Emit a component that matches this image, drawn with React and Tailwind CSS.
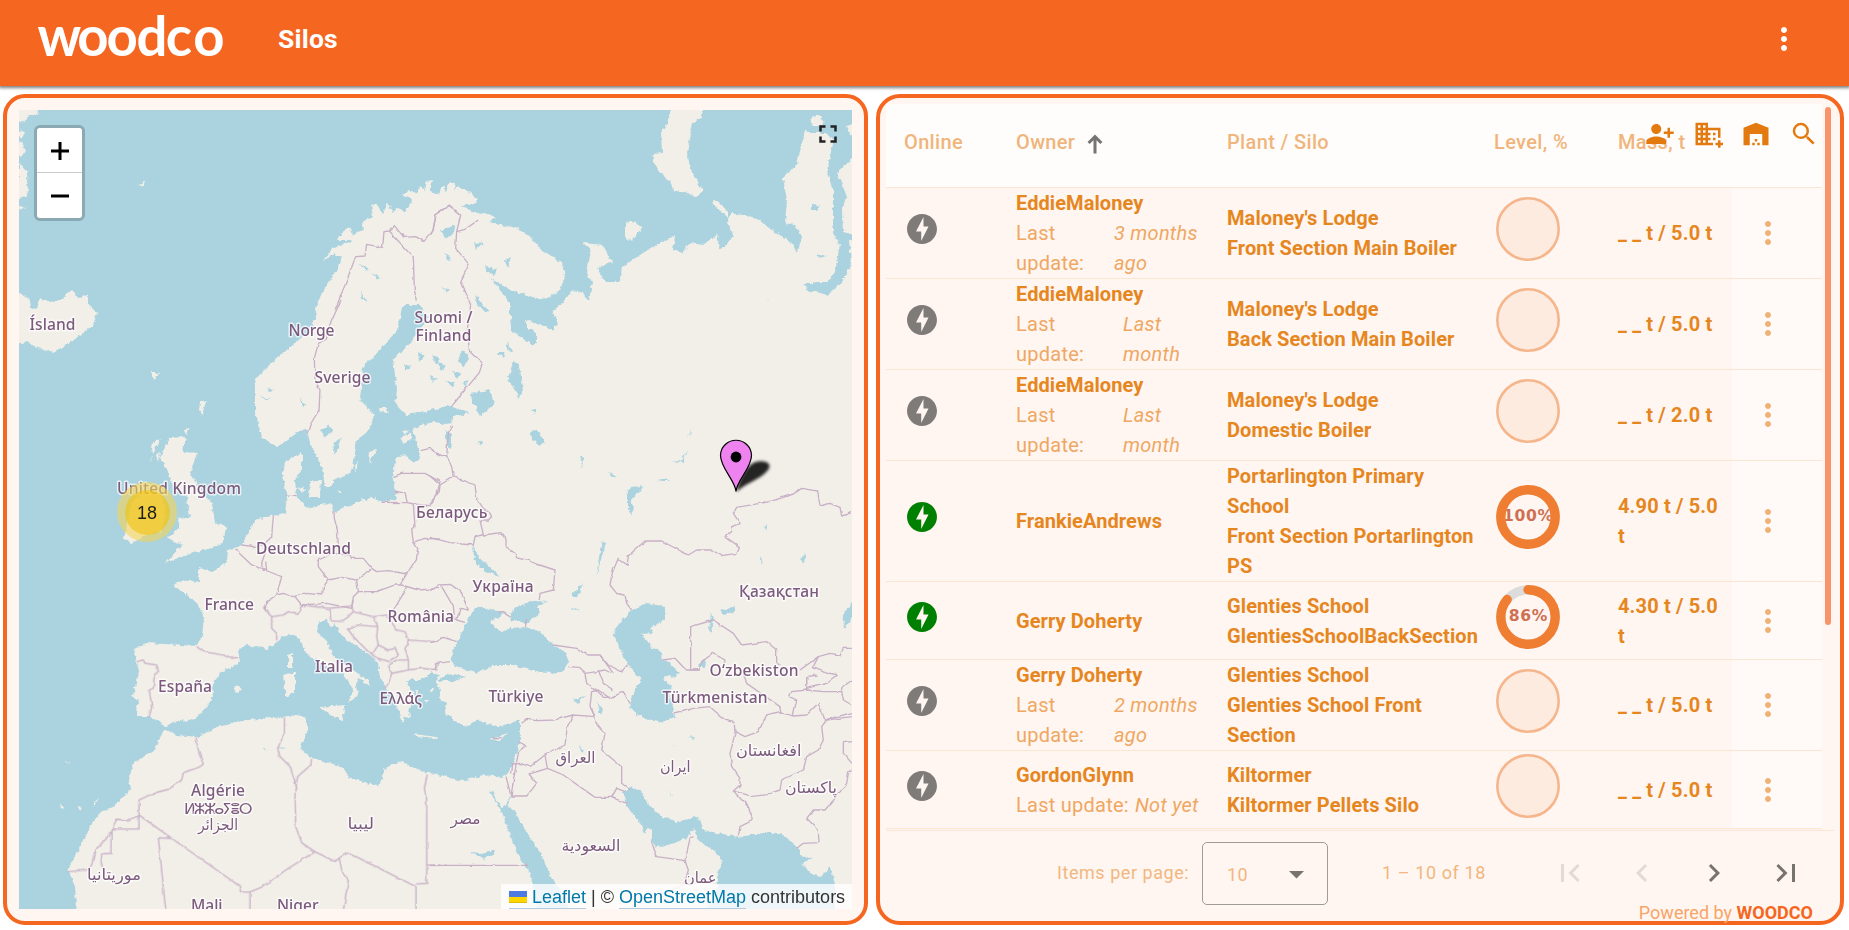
import React from "react";
import {
  MdPersonAddAlt1,
  MdDomainAdd,
  MdWarehouse,
  MdSearch,
  MdMoreVert,
  MdFullscreen,
  MdFirstPage,
  MdLastPage,
  MdChevronLeft,
  MdChevronRight,
  MdOfflineBolt,
} from "react-icons/md";

const WATER = "#aad3df";
const LAND = "#f2efe9";

const EURAFRICA =
  "315,308 320,297 328,283 337,270 342,257 335,254 323,260 333,248 353,240 338,240 342,232 350,228 352,236 364,229 360,223 373,217 371,205 376,204 383,213 388,203 392,212 400,208 404,212 413,200 402,195 410,190 417,194 419,186 425,190 427,181 433,180 430,190 438,195 443,186 446,192 449,182 455,182 454,190 459,187 468,190 478,200 474,204 460,206 477,213 485,212 495,218 490,221 502,225 517,228 530,237 542,250 553,257 562,263 565,277 560,290 550,297 540,299 527,295 510,290 498,283 490,278 500,290 510,303 510,320 512,332 522,338 532,345 537,342 537,333 527,328 525,320 537,323 552,330 558,323 552,312 563,302 573,290 583,293 589,302 592,282 587,273 591,250 583,243 603,245 612,262 597,268 605,282 620,282 622,267 643,253 660,243 675,235 673,250 682,253 690,243 703,245 717,235 720,248 725,247 733,235 727,220 732,213 757,218 777,233 792,243 797,253 802,237 795,225 785,223 787,200 783,178 797,165 805,130 812,133 825,133 834,140 827,170 833,187 833,233 840,245 835,272 827,283 803,283 807,290 828,295 843,282 851,263 849,240 862,236 862,925 76,925 76,909 75,887 68,868 80,848 88,830 100,812 113,807 130,790 129,780 133,763 155,750 162,733 166,728 160,722 150,717 137,717 138,700 133,697 139,667 133,650 147,643 197,646 202,637 204,617 197,603 187,595 173,585 187,580 199,582 199,568 213,572 227,562 228,550 242,545 255,520 267,517 285,513 287,497 283,477 285,462 302,453 302,470 295,480 297,497 307,508 330,503 335,512 370,497 382,502 397,500 393,480 395,460 403,453 413,463 421,458 415,440 413,428 433,422 446,424 452,423 453,417 470,413 458,409 447,405 440,408 407,415 395,403 397,390 393,360 410,343 416,335 428,318 420,305 405,305 402,308 397,330 383,347 363,367 360,400 375,415 367,432 357,440 353,467 348,475 333,480 333,487 325,487 322,468 310,443 307,428 297,433 277,447 262,437 255,413 255,380 267,367 287,350 307,333 317,317";

const ISLANDS = [
  "170,438 186,437 182,452 197,453 190,473 200,487 212,503 215,523 228,527 220,545 187,555 165,563 182,545 168,538 180,527 177,518 190,517 187,497 173,487 167,470 160,457",
  "146,490 160,494 166,510 162,530 145,536 131,543 124,539 128,518 133,500",
  "9,290 22,294 30,300 31,308 37,309 40,298 52,303 62,299 72,290 79,297 88,295 88,304 97,313 93,325 70,343 53,352 37,348 30,342 9,344",
  "674,100 710,100 700,118 693,123 687,153 692,173 703,192 697,196 684,193 673,190 670,181 660,173 653,160 654,154 662,153 661,133 667,122",
  "625,223 635,221 642,229 632,241 625,237",
  "713,199 719,202 728,212 728,217 714,206",
  "810,120 817,114 825,122 818,127 812,127",
  "846,126 862,122 862,135 850,134",
  "862,150 837,172 847,197 842,210 843,232 862,235",
  "9,100 39,110 38,115 30,115 24,121 9,122",
  "9,128 25,132 22,138 19,136 9,145",
  "19,141 26,149 22,156 9,154",
  "19,163 27,172 28,196 19,199",
  "135,188 145,180 143,185 138,186",
  "19,206 25,207 20,211",
  "283,675 295,672 295,692 286,697",
  "288,655 293,652 293,668 288,668",
  "320,707 345,705 342,721 330,715",
  "233,688 239,686 242,690 237,692",
  "414,734 437,737 436,739 416,737",
  "489,739 508,733 500,741",
  "310,482 321,480 320,497 309,497",
  "298,487 305,488 302,494",
  "368,453 377,448 370,463",
  "354,468 358,460 356,472",
  "400,438 411,433 412,438 404,444",
  "402,431 409,430 405,434",
  "378,408 387,408 389,413 381,412",
  "150,373 159,373 154,380",
  "200,403 206,401 202,415 199,410",
  "184,431 190,427 187,434",
  "151,443 161,439 153,453",
  "156,455 160,453 158,462",
  "150,457 152,455 151,463",
  "60,803 63,808 61,809",
  "78,807 82,808 80,811",
  "92,807 98,798 96,804",
  "66,761 70,762 67,763",
  "527,320 535,323 535,332 526,326",
  "415,690 418,690 418,694",
  "424,700 428,700 427,703",
  "431,688 434,690 431,692",
  "337,490 342,492 339,494",
];

const SEAS = [
  "165,727 173,722 195,719 213,700 212,685 220,673 240,662 238,650 247,645 267,649 277,642 288,634 300,639 305,652 325,667 343,673 353,690 348,703 358,695 357,683 358,677 370,686 368,680 350,668 333,657 327,640 317,632 318,622 328,620 330,628 335,623 343,637 370,655 378,663 380,678 388,690 397,707 403,722 406,716 410,717 408,707 417,700 406,680 420,680 430,673 440,675 436,683 440,690 440,698 447,704 445,712 453,720 467,727 477,720 497,727 520,720 520,740 512,768 503,777 483,775 463,781 430,773 427,773 413,767 400,761 383,770 383,780 377,786 348,777 343,767 312,758 300,748 307,733 307,718 297,715 283,717 247,720 217,727 197,737 177,735 165,730",
  "475,608 467,620 457,643 450,657 455,667 477,673 497,665 513,665 540,673 563,672 569,662 565,652 553,645 540,632 527,627 510,628 502,633 490,622 505,613 485,608",
  "512,610 527,603 547,600 537,607 540,613 527,623 510,620",
  "438,681 445,675 455,674 466,677 455,681",
  "632,610 647,603 665,607 665,620 650,628 653,633 642,634 652,647 662,653 663,660 668,662 680,673 675,677 665,676 663,679 672,687 669,694 672,703 674,718 657,722 642,717 630,708 632,695 642,678 635,673 630,667 619,647 613,632 622,620",
  "623,793 630,787 640,790 650,807 663,817 677,822 695,817 700,820 703,830 738,837 763,833 780,833 792,843 800,850 800,856 813,858 802,862 810,873 820,877 830,867 833,875 835,887 835,925 700,925 718,885 717,873 723,862 713,850 697,840 694,828 688,837 675,843 657,847 652,842 652,830 648,828 645,834 640,823 627,807",
  "489,790 492,792 502,808 505,806 508,800 511,794 508,805 513,810 527,833 543,857 547,870 558,887 572,912 575,925 540,925 533,887 530,873 517,853 502,812",
  "470,393 490,390 494,404 480,416 473,403",
  "513,362 519,366 524,390 519,398 508,378",
  "530,431 537,430 545,442 539,446 533,440",
  "630,487 643,486 632,500 633,517 627,505 627,495",
  "572,595 583,583 580,593 575,596",
  "320,430 330,425 333,431 325,438",
  "333,445 341,438 335,455",
  "445,430 451,434 451,450 447,444",
  "711,612 713,618 711,633 709,630",
  "720,611 735,606 735,611 724,615",
  "852,604 842,615 845,628 852,618 862,614 862,600",
  "573,700 584,696 578,704",
  "596,703 603,708 601,715",
  "698,665 705,659 706,667 700,667",
  "472,852 480,853 494,850 493,855 483,860",
  "688,737 696,736 695,739",
  "580,745 584,751 581,752",
  "670,744 677,747 672,746",
  "669,792 675,796 671,795",
  "658,480 665,478 670,481 662,481",
  "673,463 681,460 687,450 683,462",
  "688,436 694,425 690,434",
  "530,410 536,409 536,414",
  "608,472 617,477 612,477",
  "580,455 583,458 582,468",
  "477,443 483,440 481,445",
  "473,541 476,555 500,577 485,571 474,560",
  "571,607 585,614 573,609",
  "602,540 606,543 598,570 596,576",
  "800,558 806,554 804,562",
  "760,560 762,556 761,565",
  "764,527 768,525 766,530",
  "812,204 820,205 817,210 812,210",
  "817,254 826,257 820,259",
  "440,230 456,225 452,237 445,238",
  "474,242 484,243 476,250",
  "485,265 497,270 494,276 487,272",
  "505,260 511,256 508,268",
  "474,295 489,311 485,312 476,302",
  "497,352 505,352 503,358",
  "506,341 513,351 509,352",
  "445,253 452,259 447,260",
  "443,287 450,289 446,292",
  "462,350 470,357 463,368 458,360",
  "432,355 440,360 436,364",
  "438,362 446,366 441,372",
  "452,372 461,374 458,379",
  "448,382 456,382 452,387",
  "463,382 468,380 464,386",
  "430,375 437,378 432,383",
  "358,263 370,270 364,269",
  "372,273 381,279 376,278",
  "360,290 367,302 362,298",
  "445,256 450,258 447,260",
  "404,364 411,366 406,372",
  "418,352 424,356 419,362",
  "266,388 275,390 268,391",
  "259,396 272,399 264,399",
  "301,398 306,405 303,407",
  "278,747 288,748 282,749",
  "263,748 267,749 264,750",
  "768,300 769,295 768,303",
];

/* Frontiers, grouped by the tile they were digitised from; tile units are a third of a map pixel. */
const BORDERS = [
  {
    at: "translate(0 0) scale(.33333)",
    lines: [
      "1005,930 1035,855 1067,770 1095,768 1100,733 1148,742 1152,695 1168,693 1183,677 1212,712 1247,710 1272,724 1298,694 1308,642 1348,617 1380,642",
      "1168,693 1240,773 1243,870 1249,902",
    ],
  },
  {
    at: "translate(430 90) scale(.33333)",
    lines: [
      "0,437 10,420 18,372 58,345 92,375 80,425 77,475 117,523 93,572 122,645 112,720 118,780 157,820 148,848 80,930 65,950",
      "80,425 105,418 145,390",
    ],
  },
  {
    at: "translate(0 300) scale(.33333)",
    lines: [
      "1023,0 985,85 975,120 955,130 943,175 945,240 960,270 957,330 930,375 922,400",
      "1262,452 1290,445 1320,467",
      "1180,530 1205,520 1275,520 1320,545 1312,580 1290,617 1240,612",
      "1185,573 1215,580 1222,608 1145,607",
      "1222,608 1240,612 1245,680 1235,690 1240,725 1253,745 1250,775 1220,822 1200,855",
      "1245,725 1270,715 1320,717",
      "1002,635 1003,655 1012,690 1015,735 1050,765 1055,775 1090,775 1115,805 1130,815 1165,812 1220,822",
      "1050,765 1000,760 955,780 955,800 985,840 1025,832 1070,840 1115,805",
      "985,840 970,860 968,885 920,880 880,890 850,880 830,885 845,830 795,810 755,795 705,748",
      "820,645 815,710 795,730 795,760 785,790 788,810 800,812 797,785",
      "725,735 760,740 795,733",
      "857,585 890,587",
      "1070,840 1075,875 1130,875 1185,855 1205,855 1255,870 1320,865",
      "1220,860 1205,890 1180,930",
      "885,890 905,915 980,910 1055,925 1060,890 1075,875",
      "830,885 800,905 795,930",
    ],
  },
  {
    at: "translate(0 600) scale(.33333)",
    lines: [
      "795,15 795,30 815,50 815,85 830,100 830,122",
      "815,50 850,45 865,35 895,40 905,15",
      "905,15 985,25 1055,18 1060,0",
      "990,28 992,62 1030,65 1060,35 1055,15",
      "1060,35 1120,50 1160,45 1190,90 1215,95 1225,120 1215,145 1225,180 1225,210 1265,205 1310,210 1315,190",
      "1120,50 1133,80 1075,75 1042,85 1060,110 1115,165 1135,135 1130,110 1133,80",
      "1135,135 1165,150 1185,145 1195,165 1165,185 1135,175 1115,165",
      "1225,120 1300,125 1320,118",
      "1165,195 1190,180 1225,180",
      "1165,195 1175,220 1225,210",
      "1175,220 1165,250 1155,265",
      "590,140 610,155 670,165 690,175 715,172",
      "410,185 430,180 435,190 470,195 475,210 462,235 460,265 448,270 455,320 448,350",
      "588,412 597,460 610,492 600,500 550,518 545,540 505,568 460,580 417,600 417,687 333,687",
      "417,645 515,715 690,838 718,858 722,876 750,876 788,860 860,808 945,755",
      "515,715 475,713 497,930",
      "750,876 750,930",
      "417,648 385,660 350,658 320,715 285,750 275,795 260,810 205,815",
      "333,687 333,760 305,762 303,790 315,820",
      "853,352 853,400 833,445 840,470 870,500 890,560 885,580 887,680 905,728 945,755 1000,782 1045,758 1248,860 1248,930",
      "935,475 932,495 893,530 887,560",
      "1018,775 1025,810 1045,840 1030,930",
      "1282,523 1273,565 1280,600 1280,850 1248,852",
      "1280,795 1320,795",
    ],
  },
  {
    at: "translate(430 390) scale(.33333)",
    lines: [
      "0,175 35,197 50,197 55,130 65,105",
      "50,197 65,230 70,260 110,275 135,285 140,325 160,355 180,370 185,380 175,390 150,390 160,435 135,440 130,465 95,462 60,458 0,442",
      "0,258 30,285 70,260",
      "30,285 28,305 0,340",
      "160,435 213,428 228,450 228,470 255,490 260,503 290,510 320,522 375,540 370,600 330,610 328,630",
      "0,602 30,585 60,583 90,600 115,660 90,655 80,690 105,697",
      "35,590 70,650 75,690",
      "0,760 40,742 80,755",
      "0,840 15,838 20,820 60,815",
      "288,688 287,712",
      "208,668 220,668 243,682",
      "370,765 440,775 475,795 510,795 535,825 575,845 592,825",
      "415,830 445,832 465,850 500,845 525,840 545,850",
      "465,850 470,880 500,905",
      "505,840 520,880 550,900",
      "510,795 550,850",
      "1266,367 1235,378 1230,352 1200,340 1170,348 1163,303 1115,295 1090,312 1020,335 920,352 910,370 930,400 905,410 905,425 885,440 928,470 920,490 875,497 845,480 800,480 775,495 695,453 645,453 595,497 592,525 565,505 548,545 540,585 560,610 585,615 590,640 605,660",
      "808,840 782,840 782,710 850,690 910,730 935,765 1010,755 1040,780 1040,820 1052,825",
      "697,810 735,805 768,840 808,840 815,815 850,790 885,810 880,830",
      "1110,840 1165,800 1200,790 1230,795 1240,775 1266,775",
      "1165,800 1150,830 1185,845 1220,855 1185,882 1130,895 1130,860 1160,855",
    ],
  },
  {
    at: "translate(430 640) scale(.33333)",
    lines: [
      "0,676 293,676",
      "228,410 243,468 290,468 320,430 297,402 353,385 400,405 495,472 545,472 590,490",
      "545,472 560,445 585,455",
      "243,468 258,375 265,340 285,315 265,305",
      "245,400 248,372 270,370 300,380 345,345 352,385",
      "345,345 405,315 412,260 430,225",
      "275,250 290,238 320,242 370,240 430,225 495,230",
      "495,230 480,200 485,155 505,150 540,175 580,155 600,190",
      "495,145 520,172 545,172",
      "485,205 500,250 525,280 515,330 575,380 575,430 600,450",
      "733,222 790,205 840,200 885,240 913,248 915,280 900,340 905,380 930,415 930,435 910,453 960,467 1020,460 1050,450 1055,420 1120,390 1130,350 1165,330 1180,300 1175,260 1190,240",
      "915,275 945,290 985,275 1010,225 1050,215 1090,228 1130,225 1165,190 1185,240 1266,218",
      "1190,240 1266,230",
      "910,453 955,500 970,540 930,560 925,590",
      "940,105 950,130 1000,165 1050,200 1053,220",
      "1090,225 1100,180 1078,170 1085,155 1130,150 1180,155 1235,155 1240,180 1266,195",
      "1266,120 1240,140 1235,155",
      "1130,150 1130,110",
      "1266,390 1255,400 1250,430 1215,475 1185,510 1150,510 1130,535 1165,570 1167,608 1120,610 1100,625",
      "1266,305 1240,308 1240,340 1266,370",
      "665,605 680,650 765,662 780,595 790,590",
      "765,662 775,690 762,735 690,765",
      "185,293 215,293",
    ],
  },
];

/* [text, left, right, baseline] */
const LABELS = [
  ["Ísland", 29.5, 75.5, 329.5],
  ["Norge", 288.5, 334.5, 336],
  ["Sverige", 314.5, 370.5, 383],
  ["Suomi /", 414.5, 472.5, 322.5],
  ["Finland", 415.5, 471.5, 340.5],
  ["United Kingdom", 117, 241, 494],
  ["Беларусь", 416, 487.5, 518],
  ["Deutschland", 256, 351, 554],
  ["France", 204.5, 254, 610],
  ["Україна", 472.5, 533.5, 592],
  ["România", 387.5, 454, 621.5],
  ["Қазақстан", 739, 819, 596.5],
  ["Italia", 315, 353, 671.5],
  ["España", 158, 212, 692],
  ["Ελλάς", 379.5, 422, 703.5],
  ["Türkiye", 488.5, 543.5, 701.5],
  ["Oʻzbekiston", 709.5, 798.5, 675.5],
  ["Türkmenistan", 662.5, 767.5, 702.5],
  ["Algérie", 191, 245, 795.5],
  ["ⵍⵣⵣⴰⵢⴻⵔ", 184, 252.5, 813.5],
  ["الجزائر", 198, 238, 830],
  ["ليبيا", 347.5, 374, 829],
  ["موريتانيا", 87, 141, 880],
  ["Mali", 191, 222.5, 911],
  ["Niger", 277, 318.5, 911],
  ["مصر", 450.5, 480.5, 824],
  ["السعودية", 561.5, 620.5, 851],
  ["العراق", 555.5, 595.5, 763],
  ["ايران", 660, 690.5, 771.5],
  ["افغانستان", 736, 801.5, 755.5],
  ["پاکستان", 785, 837, 793],
  ["عمان", 684, 716.5, 883],
];

function MapCanvas() {
  return (
    <svg viewBox="19 110 833 799" className="block h-full w-full bg-[#aad3df]">
      <defs>
        <filter id="coast" filterUnits="userSpaceOnUse" x="0" y="90" width="872" height="840">
          <feTurbulence type="fractalNoise" baseFrequency="0.2" numOctaves="3" seed="7" />
          <feDisplacementMap in="SourceGraphic" scale="5" xChannelSelector="R" yChannelSelector="G" />
        </filter>
        <filter id="frontier" filterUnits="userSpaceOnUse" x="0" y="90" width="872" height="840">
          <feTurbulence type="fractalNoise" baseFrequency="0.12" numOctaves="2" seed="3" />
          <feDisplacementMap in="SourceGraphic" scale="3" xChannelSelector="R" yChannelSelector="G" />
        </filter>
        <filter id="soft" x="-50%" y="-50%" width="200%" height="200%">
          <feGaussianBlur stdDeviation="1.6" />
        </filter>
      </defs>
      <g filter="url(#coast)">
        <rect x="0" y="90" width="872" height="840" fill={WATER} />
        <polygon points={EURAFRICA} fill={LAND} />
        {SEAS.map((p, i) => (
          <polygon key={i} points={p} fill={WATER} />
        ))}
        {ISLANDS.map((p, i) => (
          <polygon key={i} points={p} fill={LAND} />
        ))}
      </g>
      <g filter="url(#frontier)">
        {BORDERS.map((b) => (
          <g key={b.at} transform={b.at} fill="none" stroke="#c8b1c6" strokeWidth="4" strokeLinejoin="round">
            {b.lines.map((l, i) => (
              <polyline key={i} points={l} />
            ))}
          </g>
        ))}
      </g>
      <g
        fill="#7b5a7d"
        stroke="#ffffff"
        strokeOpacity="0.7"
        strokeWidth="3"
        strokeLinejoin="round"
        paintOrder="stroke"
        fontFamily="'Noto Sans', 'DejaVu Sans', sans-serif"
        fontWeight="500"
        fontSize="15.6"
        textAnchor="middle"
      >
        {LABELS.map(([t, a, b, y]) => (
          <text key={t} x={(a + b) / 2} y={y} textLength={b - a} lengthAdjust={t.charCodeAt(0) > 1500 && t.charCodeAt(0) < 2000 ? "spacingAndGlyphs" : "spacing"}>
            {t}
          </text>
        ))}
      </g>
      <path d="M736.5 492 C738 482 745 467 754 462.5 C765 459 773 463 768 470 C760 480 745 483 736.5 492Z" fill="#000" fillOpacity="0.85" filter="url(#soft)" />
      <path
        d="M736 491.5 C735.5 481 720.5 468 720.5 455.5 A15.5 15.3 0 0 1 751.5 455.5 C751.5 468 736.5 481 736 491.5Z"
        fill="#ee82ee"
        stroke="#000"
        strokeWidth="1.2"
      />
      <circle cx="736" cy="457" r="5.4" fill="#000" />
    </svg>
  );
}

function MapPanel() {
  return (
    <section className="h-[831px] w-[865px] rounded-[22px] border-4 border-[#f56621] bg-[#fff6f1] p-3">
      <div className="relative h-[799px] w-[833px] overflow-hidden">
        <MapCanvas />
        <div className="absolute left-[15px] top-[15px] rounded-md border-[3px] border-[#8aa9b3]">
          <div className="flex h-[45px] w-[45px] items-center justify-center rounded-t-[3px] border-b border-[#ccc] bg-white pt-0.5 pl-px">
            <svg width="18" height="18" viewBox="0 0 18 18" stroke="#000" strokeWidth="3">
              <path d="M0 9H18M9 0V18" />
            </svg>
          </div>
          <div className="flex h-[45px] w-[45px] items-center justify-center rounded-b-[3px] bg-white pt-px pl-px">
            <svg width="18" height="18" viewBox="0 0 18 18" stroke="#000" strokeWidth="3">
              <path d="M0 9H18" />
            </svg>
          </div>
        </div>
        <MdFullscreen className="absolute left-[794px] top-[9px] text-[#222]" size={30} />
        <div className="absolute left-[98px] top-[372px] flex h-[60px] w-[60px] items-center justify-center rounded-full bg-[#f1d357]/60">
          <div className="flex h-[45px] w-[45px] items-center justify-center rounded-full bg-[#f0c20c]/60 pt-0.5 font-['Liberation_Sans',sans-serif] text-lg text-[#1c1c1c]">
            18
          </div>
        </div>
        <div className="absolute bottom-0 right-0 flex h-[25px] w-[351px] items-center whitespace-pre bg-white/80 pl-2 pt-px font-['Liberation_Sans',sans-serif] text-[18px] text-[#333]">
          <span className="flex h-[23px] items-center border-b border-[#b5cbe0] pt-px text-[#0078a8]">
            <svg width="18" height="12" className="mr-[5px]">
              <rect width="18" height="6" fill="#4c7be1" />
              <rect y="6" width="18" height="6" fill="#ffd500" />
              <rect y="11" width="18" height="1" fill="#e0bc00" />
            </svg>
            Leaflet
          </span>
          {" | © "}
          <span className="flex h-[23px] items-center border-b border-[#b5cbe0] pt-px text-[#0078a8]">OpenStreetMap</span>
          {" contributors"}
        </div>
      </div>
    </section>
  );
}

const ROWS = [
  { h: "h-[91px]", owner: "EddieMaloney", left: "w-[98px]", label: ["Last", "update:"], when: ["3 months", "ago"], plant: ["Maloney's Lodge", "Front Section Main Boiler"], mass: ["_ _ t / 5.0 t"] },
  { h: "h-[91px]", owner: "EddieMaloney", left: "w-[107px]", label: ["Last", "update:"], when: ["Last", "month"], plant: ["Maloney's Lodge", "Back Section Main Boiler"], mass: ["_ _ t / 5.0 t"] },
  { h: "h-[91px]", owner: "EddieMaloney", left: "w-[107px]", label: ["Last", "update:"], when: ["Last", "month"], plant: ["Maloney's Lodge", "Domestic Boiler"], mass: ["_ _ t / 2.0 t"] },
  { h: "h-[121px]", owner: "FrankieAndrews", online: true, level: 100, plant: ["Portarlington Primary", "School", "Front Section Portarlington", "PS"], mass: ["4.90 t / 5.0", "t"] },
  { h: "h-[78px]", owner: "Gerry Doherty", online: true, level: 86, plant: ["Glenties School", "GlentiesSchoolBackSection"], mass: ["4.30 t / 5.0", "t"] },
  { h: "h-[91px]", owner: "Gerry Doherty", left: "w-[98px]", label: ["Last", "update:"], when: ["2 months", "ago"], plant: ["Glenties School", "Glenties School Front", "Section"], mass: ["_ _ t / 5.0 t"] },
  { h: "h-[78px]", owner: "GordonGlynn", left: "w-[119px]", label: ["Last update:"], when: ["Not yet"], plant: ["Kiltormer", "Kiltormer Pellets Silo"], mass: ["_ _ t / 5.0 t"] },
];

const COLS = "grid grid-cols-[130px_211px_267px_124px_114px_90px]";

function Gauge({ level }) {
  if (level === undefined) {
    return (
      <svg width="66" height="66" viewBox="0 0 66 66">
        <circle cx="33" cy="33" r="30.7" fill="#fdebe0" stroke="#f5b68c" strokeWidth="2.6" />
      </svg>
    );
  }
  const c = 2 * Math.PI * 27.2;
  return (
    <svg width="66" height="66" viewBox="0 0 66 66">
      <text x="33.4" y="36.6" textAnchor="middle" fontFamily="'DejaVu Sans', sans-serif" fontWeight="700" fontSize="15.6" letterSpacing="0.7" fill="#cf7051">
        {level}%
      </text>
      <circle cx="33" cy="33" r="27.2" fill="none" stroke="#dcdcdc" strokeWidth="9" />
      <circle
        cx="33"
        cy="33"
        r="27.2"
        fill="none"
        stroke="#ef7e32"
        strokeWidth="9.4"
        strokeLinecap="round"
        strokeDasharray={`${(c * level) / 100} ${c}`}
        transform="rotate(-90 33 33)"
      />
    </svg>
  );
}

function Lines({ items }) {
  return items.map((t) => <div key={t}>{t}</div>);
}

function SiloTable() {
  return (
    <div className="flex h-[726px] w-[948px]">
      <div className="w-[936px]">
        <div className={`${COLS} h-[84px] items-center border-b border-[#fbe5d3] bg-[#fffdfb] pb-2 text-[20px] font-medium tracking-[0.35px] text-[#f0b57c]`}>
          <div className="pl-[18px]">Online</div>
          <div className="flex items-center">
            Owner
            <svg width="16" height="20" viewBox="0 0 16 20" className="ml-3 mt-1" fill="none" stroke="#757575" strokeWidth="3">
              <path d="M8 19.5V3M1.6 9L8 2.6L14.4 9" />
            </svg>
          </div>
          <div>Plant / Silo</div>
          <div>Level, %</div>
          <div>Mass, t</div>
          <div />
        </div>
        {ROWS.map((r, i) => (
          <div key={i} className={`${COLS} ${r.h} border-b border-[#fbe5d3] text-[20px] font-medium leading-[30px] tracking-[0.3px] text-[#e6861f]`}>
            <div className="flex items-center pb-2 pl-[18px]">
              <MdOfflineBolt size={36} className={r.online ? "text-[#008000]" : "text-[#7f7b78]"} />
            </div>
            <div className="flex flex-col justify-center font-bold tracking-[0.08px]">
              <div>{r.owner}</div>
              {r.label && (
                <div className="flex font-normal tracking-[0.25px] text-[#efa763]">
                  <div className={r.left}>
                    <Lines items={r.label} />
                  </div>
                  <div className="italic">
                    <Lines items={r.when} />
                  </div>
                </div>
              )}
            </div>
            <div className="flex flex-col justify-center font-bold tracking-[0.1px]">
              <Lines items={r.plant} />
            </div>
            <div className="flex items-center pb-2 pl-px">
              <Gauge level={r.level} />
            </div>
            <div className="flex flex-col justify-center font-bold tracking-[0.15px]">
              <Lines items={r.mass} />
            </div>
            <div className="flex items-center bg-[#fffaf7] pl-[18px]">
              <MdMoreVert size={36} className="text-[#f0b175]" />
            </div>
          </div>
        ))}
      </div>
      <div className="ml-[3px] mt-[3px] h-[518px] w-1.5 rounded-full bg-[#f9936a]" />
    </div>
  );
}

function Paginator() {
  return (
    <div className="flex h-[90px] w-[948px] items-start border-t border-[#fbe5d3] pl-[171px] text-[18px] text-[#f2b680]">
      <div className="flex h-[83px] items-center">
        <div className="w-[145px] tracking-[0.55px]">Items per page:</div>
        <div className="mt-0.5 flex h-[63px] w-[126px] items-center justify-between rounded-[5px] border border-[#9f9b98] pl-6 pr-[23px] pt-0.5 tracking-[0.4px]">
          10
          <svg width="15" height="8" viewBox="0 0 15 8">
            <path d="M0 0H15L7.5 7.5Z" fill="#77736f" />
          </svg>
        </div>
        <div className="ml-[54px] w-[170px] tracking-[0.6px]">1 – 10 of 18</div>
        <div className="flex gap-9 text-[#77736f]">
          <MdFirstPage size={36} className="text-[#e2dad5]" />
          <MdChevronLeft size={36} className="text-[#e2dad5]" />
          <MdChevronRight size={36} />
          <MdLastPage size={36} />
        </div>
      </div>
    </div>
  );
}

function SiloPanel() {
  return (
    <section className="relative h-[831px] w-[968px] rounded-[24px] border-4 border-[#f56621] bg-[#fff6f1] pl-1.5 pt-1.5">
      <SiloTable />
      <Paginator />
      <div className="absolute left-[765px] top-[21px] flex gap-[18px] text-[#e27a10]">
        <MdPersonAddAlt1 size={30} />
        <MdDomainAdd size={30} />
        <MdWarehouse size={30} />
        <MdSearch size={30} />
      </div>
      <div className="absolute -bottom-[4px] right-[27px] text-[18px] leading-[24px] text-[#f9a468]">
        Powered by <span className="font-bold text-[#f56621]">WOODCO</span>
      </div>
    </section>
  );
}

export default function App() {
  return (
    <div className="h-[930px] w-[1849px] overflow-hidden bg-white font-['Roboto',sans-serif]">
      <header className="relative flex h-[86px] items-start justify-between bg-[#f56621] text-white shadow-[0_1px_3px_1px_rgba(0,0,0,0.5)]">
        <div className="flex">
          <svg width="240" height="78" viewBox="0 0 240 78">
            <text x="37.6 77.3 106.4 136.6 165.7 193.2" y="56" fill="#fff" fontFamily="Lato, sans-serif" fontWeight="700" fontSize="54.5">
              woodco
            </text>
          </svg>
          <h1 className="ml-[38px] flex h-[77px] items-center text-[26.5px] font-bold tracking-[0.2px]">Silos</h1>
        </div>
        <MdMoreVert size={36} className="mr-[47px] mt-[21px]" />
      </header>
      <main className="flex gap-2 pl-[3px] pt-2">
        <MapPanel />
        <SiloPanel />
      </main>
    </div>
  );
}
